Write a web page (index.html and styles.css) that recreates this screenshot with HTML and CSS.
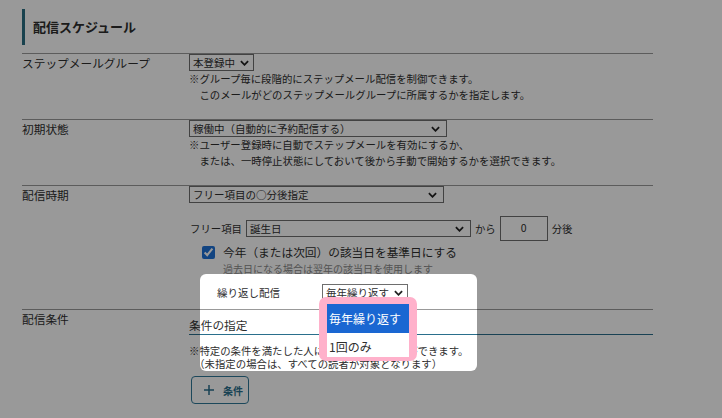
FILE: index.html
```html
<!DOCTYPE html>
<html lang="ja">
<head>
    <meta charset="UTF-8">
    <title>配信スケジュール</title>
    <link rel="stylesheet" href="styles.css">
</head>
<body>
    <div class="page">
        <h2 class="heading">配信スケジュール</h2>

        <div class="row">
            <div class="label">ステップメールグループ</div>
            <div class="field">
                <span class="select">本登録中<svg class="chev" viewBox="0 0 10 6"><path d="M1 1l4 4 4-4"/></svg></span>
                <p class="note">※グループ毎に段階的にステップメール配信を制御できます。<br>　このメールがどのステップメールグループに所属するかを指定します。</p>
            </div>
        </div>

        <div class="row">
            <div class="label">初期状態</div>
            <div class="field">
                <span class="select wide">稼働中（自動的に予約配信する）<svg class="chev" viewBox="0 0 10 6"><path d="M1 1l4 4 4-4"/></svg></span>
                <p class="note">※ユーザー登録時に自動でステップメールを有効にするか、<br>　または、一時停止状態にしておいて後から手動で開始するかを選択できます。</p>
            </div>
        </div>

        <div class="row timing">
            <div class="label">配信時期</div>
            <div class="field">
                <span class="select wide narrow">フリー項目の○分後指定<svg class="chev" viewBox="0 0 10 6"><path d="M1 1l4 4 4-4"/></svg></span>
                <div class="free">
                    <span>フリー項目</span>
                    <span class="select item">誕生日<svg class="chev" viewBox="0 0 10 6"><path d="M1 1l4 4 4-4"/></svg></span>
                    <span>から</span>
                    <span class="num">0</span>
                    <span>分後</span>
                </div>
                <label class="check">
                    <input type="checkbox" checked>
                    今年（または次回）の該当日を基準日にする
                </label>
                <p class="hint">過去日になる場合は翌年の該当日を使用します</p>
                <div class="repeat">
                    <span class="repeat-label">繰り返し配信</span>
                    <span class="select">毎年繰り返す<svg class="chev" viewBox="0 0 10 6"><path d="M1 1l4 4 4-4"/></svg></span>
                </div>
            </div>
        </div>

        <div class="row">
            <div class="label">配信条件</div>
            <div class="field">
                <div class="cond-head">条件の指定</div>
                <p class="note tight">※特定の条件を満たした人にのみ配信することができます。<br>　（未指定の場合は、すべての読者が対象となります）</p>
                <button class="add-btn">
                    <svg viewBox="0 0 10 10"><path d="M5 0v10M0 5h10"/></svg>
                    条件
                </button>
            </div>
        </div>
    </div>

    <!-- 説明用のハイライト -->
    <div class="spotlight"></div>

    <div class="dropdown">
        <div class="option active">毎年繰り返す</div>
        <div class="option">1回のみ</div>
    </div>
</body>
</html>
```

FILE: styles.css
```css
body {
    margin: 0;
    background: #fff;
    color: #2e2e2e;
    font-family: "Noto Sans CJK JP", "Noto Sans", sans-serif;
    overflow: hidden;
}
.page {
    width: 631px;
    padding: 9px 0 0 22px;
}
.heading {
    margin: 0 0 8px;
    height: 36px;
    line-height: 36px;
    border-left: 3px solid #2a6f82;
    padding-left: 8px;
    font-size: 13px;
    font-weight: bold;
}
.row {
    display: flex;
    border-top: 1px solid #999;
    padding-bottom: 16px;
}
.label {
    width: 167px;
    flex-shrink: 0;
    font-size: 11.7px;
    line-height: 17px;
}
.field {
    flex: 1;
    font-size: 10.5px;
    line-height: 16px;
}
.select {
    display: flex;
    align-items: center;
    width: fit-content;
    box-sizing: border-box;
    height: 17px;
    border: 1px solid #6e6e6e;
    padding: 0 4px 0 3px;
    font-size: 10.5px;
    line-height: 15px;
    background: #fff;
}
.chev {
    width: 9px;
    height: 6px;
    margin-left: 5px;
    fill: none;
    stroke: #222;
    stroke-width: 2;
}
.wide {
    width: 258px;
}
.wide.narrow {
    width: 255px;
}
.wide .chev,
.item .chev {
    margin-left: auto;
    margin-right: 2px;
}
.note {
    margin: 0;
    font-size: 10.4px;
    line-height: 16px;
}
.note.tight {
    margin-top: 9px;
    line-height: 13px;
}
.timing {
    padding-bottom: 8px;
}
.free {
    display: flex;
    align-items: center;
    gap: 4px;
    margin-top: 13px;
    font-size: 10.4px;
    padding-left: 1px;
}
.item {
    width: 225px;
}
.num {
    box-sizing: border-box;
    width: 48px;
    height: 25px;
    border: 1px solid #6e6e6e;
    text-align: center;
    line-height: 22px;
    font-size: 10.5px;
}
.check {
    display: flex;
    align-items: center;
    gap: 8px;
    margin-top: 3px;
    padding-left: 13px;
    font-size: 11.7px;
    line-height: 16px;
}
.check input {
    margin: 0;
    width: 13px;
    height: 13px;
    accent-color: #1f72d8;
}
.hint {
    margin: 1px 0 0;
    padding-left: 34px;
    font-size: 10px;
    line-height: 16px;
    color: #8a8a8a;
}
.repeat {
    display: flex;
    align-items: center;
    margin-top: 7px;
    padding-left: 28px;
}
.repeat-label {
    width: 105px;
    font-size: 10.5px;
}
.cond-head {
    padding-top: 6px;
    line-height: 18px;
    font-size: 11.7px;
    border-bottom: 1px solid #2a6f8c;
}
.add-btn {
    display: flex;
    align-items: center;
    gap: 9px;
    margin: 6px 0 0 2px;
    box-sizing: border-box;
    width: 58px;
    height: 28px;
    padding: 0 0 0 12px;
    border: 1px solid #2f7898;
    border-radius: 4px;
    background: #fff;
    color: #2a6f8c;
    font-family: inherit;
    font-size: 10px;
    font-weight: bold;
}
.add-btn svg {
    width: 10px;
    height: 10px;
    fill: none;
    stroke: #2a6f8c;
    stroke-width: 1.5;
}
.spotlight {
    position: absolute;
    left: 200px;
    top: 274px;
    width: 277px;
    height: 97px;
    border-radius: 6px;
    box-shadow: 0 0 0 1200px rgba(0, 0, 0, 0.4);
}
.dropdown {
    position: absolute;
    left: 319px;
    top: 297px;
    width: 82px;
    border: 8px solid #ffb1cb;
    border-top-width: 7px;
    border-bottom-width: 4px;
    border-radius: 7px;
    background: #fff;
    font-size: 12px;
}
.option {
    padding: 4px 2px 0;
    line-height: 20px;
}
.option.active {
    padding-top: 0;
    background: #1a67d2;
    color: #fff;
    line-height: 29px;
}
```
